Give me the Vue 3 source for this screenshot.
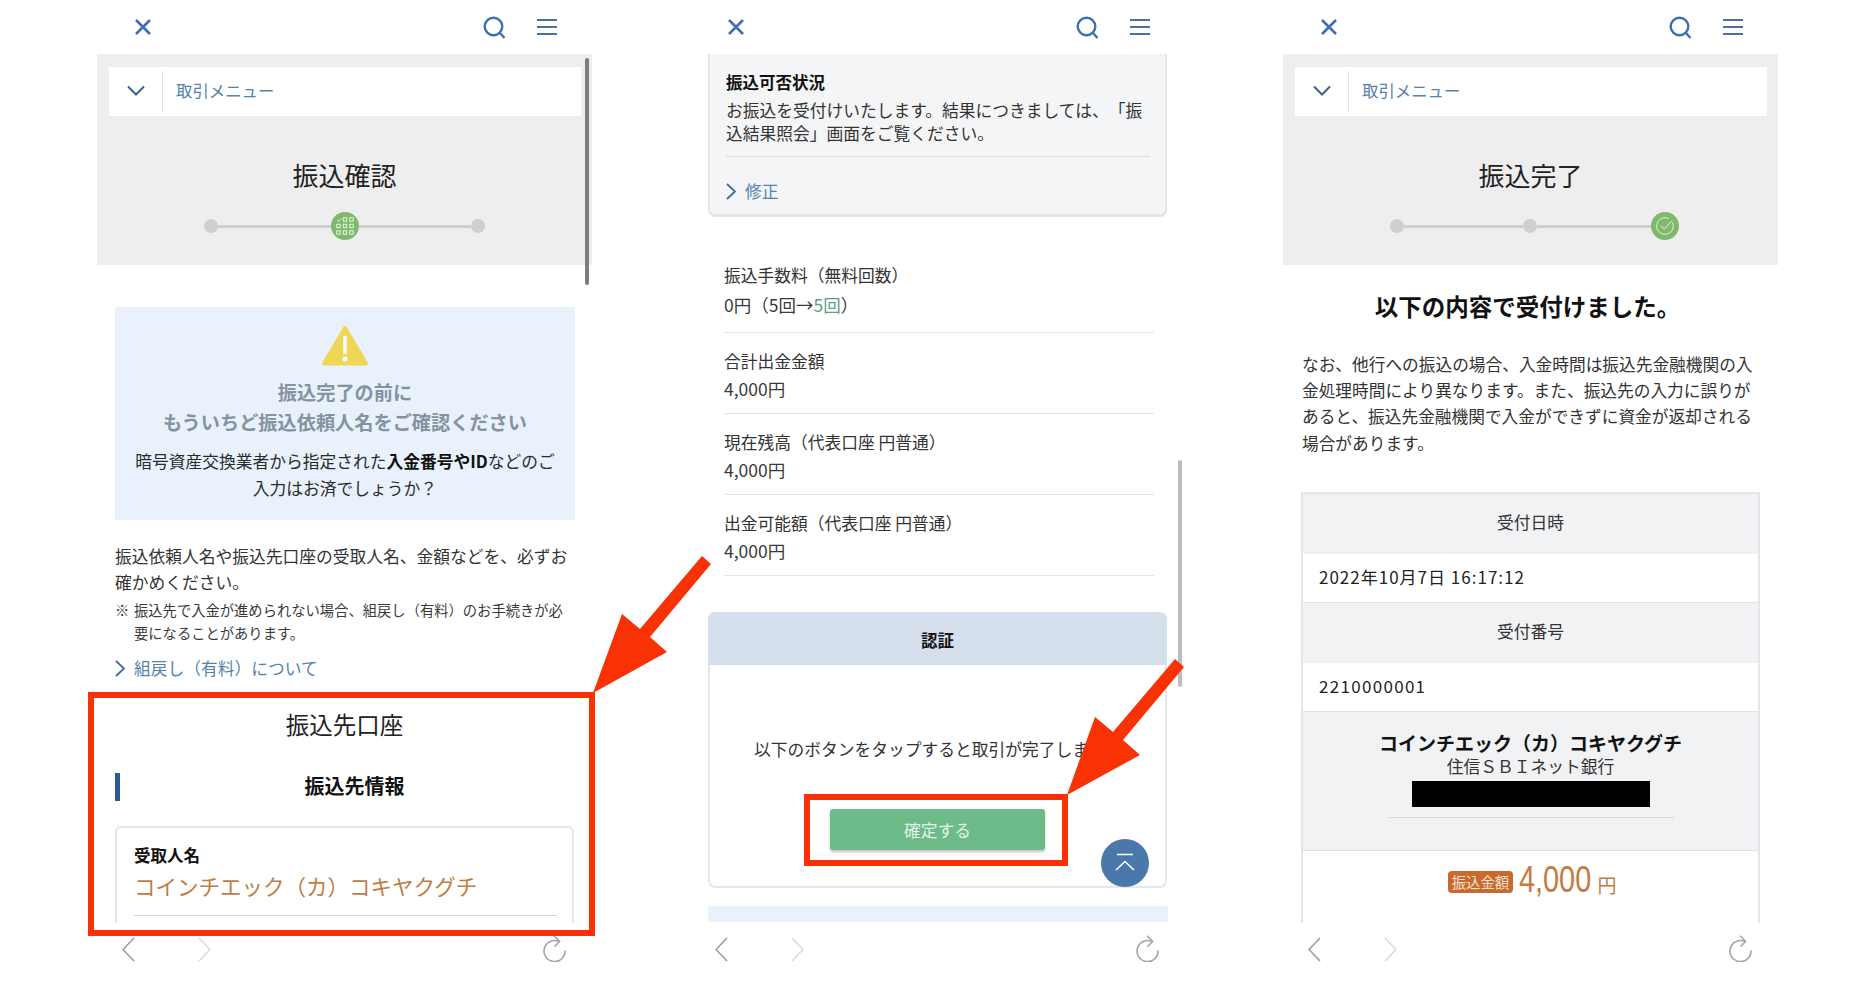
<script setup>
const phones = [1, 2, 3]
const heroes = {
  1: { title: '振込確認', steps: ['dot', 113, 'grid', 112, 'dot'] },
  3: { title: '振込完了', steps: ['dot', 119, 'dot', 114, 'check'] }
}
const rows = [
  { label: '合計出金金額', value: '4,000円' },
  { label: '現在残高（代表口座 円普通）', value: '4,000円' },
  { label: '出金可能額（代表口座 円普通）', value: '4,000円' }
]
const gridCells = [0, 1, 2, 3, 4, 5, 6, 7, 8]
</script>

<template>
  <div class="page">
    <section v-for="p in phones" :key="p" class="phone">
      <header class="topbar">
        <svg class="ic-close" width="16" height="16" viewBox="0 0 16 16"><path d="M1 1L15 15M15 1L1 15" /></svg>
        <span class="grow"></span>
        <svg class="ic-search" width="24" height="24" viewBox="0 0 24 24"><circle cx="10.5" cy="10.5" r="8.8" /><path d="M17 17L21.5 22" /></svg>
        <svg class="ic-menu" width="20" height="16" viewBox="0 0 20 16"><path d="M0 1H20M0 8H20M0 15H20" /></svg>
      </header>

      <main class="screen">
        <div v-if="p !== 2" class="hero">
          <div class="menubar">
            <span class="menu-toggle">
              <svg width="18" height="11" viewBox="0 0 18 11"><path d="M1 1.5L9 9.5L17 1.5" /></svg>
            </span>
            <span class="menu-label">取引メニュー</span>
          </div>
          <h1 class="hero-title">{{ heroes[p].title }}</h1>
          <div class="stepper">
            <template v-for="(s, i) in heroes[p].steps" :key="i">
              <span v-if="s === 'dot'" class="step-dot"></span>
              <span v-else-if="s === 'grid'" class="step-active">
                <svg width="18" height="18" viewBox="0 0 18 18">
                  <template v-for="c in gridCells" :key="c">
                    <path v-if="c === 0" d="M1 3L2.5 4.5L5 1.5" />
                    <rect v-else :x="(c % 3) * 6.5 + 0.8" :y="Math.floor(c / 3) * 6.5 + 0.8" width="3.4" height="3.4" />
                  </template>
                </svg>
              </span>
              <span v-else-if="s === 'check'" class="step-active">
                <svg width="20" height="20" viewBox="0 0 20 20">
                  <path d="M17.5 6.5A8.3 8.3 0 1 1 13.5 2.5" />
                  <path d="M5.5 9.5L9.5 13L17 4.5" />
                </svg>
              </span>
              <span v-else class="step-line" :style="{ width: s + 'px' }"></span>
            </template>
          </div>
        </div>

        <template v-if="p === 1">
          <div class="scrollbar sb-one"></div>
          <div class="notice">
            <svg class="warn" width="46" height="41" viewBox="0 0 46 41">
              <path class="warn-tri" d="M23 3L44 38.5H2Z" />
              <path class="warn-bar" d="M23 11V29" />
              <circle class="warn-dot" cx="23" cy="34" r="2.6" />
            </svg>
            <p class="notice-title">振込完了の前に<br />もういちど振込依頼人名をご確認ください</p>
            <p class="notice-body">暗号資産交換業者から指定された<b>入金番号やID</b>などのご<br />入力はお済でしょうか？</p>
          </div>
          <p class="para">振込依頼人名や振込先口座の受取人名、金額などを、必ずお確かめください。</p>
          <p class="note"><span class="note-mark">※</span><span>振込先で入金が進められない場合、組戻し（有料）のお手続きが必要になることがあります。</span></p>
          <a class="link link-one">
            <svg width="10" height="17" viewBox="0 0 10 17"><path d="M1 1L9 8.5L1 16" /></svg>
            組戻し（有料）について
          </a>
          <h2 class="account-title">振込先口座</h2>
          <div class="section-head"><span class="section-label">振込先情報</span></div>
          <div class="payee">
            <div class="payee-label">受取人名</div>
            <div class="payee-name">コインチエック（カ）コキヤクグチ</div>
            <div class="payee-line"></div>
          </div>
        </template>

        <template v-if="p === 2">
          <div class="scrollbar sb-two"></div>
          <div class="status">
            <div class="status-title">振込可否状況</div>
            <p class="status-body">お振込を受付けいたします。結果につきましては、「振込結果照会」画面をご覧ください。</p>
            <div class="status-line"></div>
            <a class="link link-two">
              <svg width="10" height="17" viewBox="0 0 10 17"><path d="M1 1L9 8.5L1 16" /></svg>
              修正
            </a>
          </div>
          <div class="row row-first">
            <div class="row-label">振込手数料（無料回数）</div>
            <div class="row-value">0円（5回→<span class="green">5回</span>）</div>
          </div>
          <div v-for="r in rows" :key="r.label" class="row">
            <div class="row-label">{{ r.label }}</div>
            <div class="row-value">{{ r.value }}</div>
          </div>
          <div class="auth">
            <div class="auth-head">認証</div>
            <div class="auth-body">
              <p class="auth-text">以下のボタンをタップすると取引が完了します。</p>
              <button class="confirm" type="button">確定する</button>
            </div>
          </div>
          <div class="next-block"></div>
          <div class="to-top">
            <svg width="22" height="22" viewBox="0 0 22 22"><path d="M3 2.5H19M2 18L11 9.5L20 18" /></svg>
          </div>
        </template>

        <template v-if="p === 3">
          <h2 class="done-title">以下の内容で受付けました。</h2>
          <p class="done-body">なお、他行への振込の場合、入金時間は振込先金融機関の入金処理時間により異なります。また、振込先の入力に誤りがあると、振込先金融機関で入金ができずに資金が返却される場合があります。</p>
          <div class="table">
            <div class="t-head">受付日時</div>
            <div class="t-val t-date">2022年10月7日 16:17:12</div>
            <div class="t-head">受付番号</div>
            <div class="t-val t-num">2210000001</div>
            <div class="t-bank">
              <div class="bank-name">コインチエック（カ）コキヤクグチ</div>
              <div class="bank-sub">住信ＳＢＩネット銀行</div>
              <div class="bank-mask"></div>
              <div class="bank-line"></div>
            </div>
            <div class="t-amount">
              <span class="badge">振込金額</span>
              <span class="amount">4,000</span>
              <span class="yen">円</span>
            </div>
          </div>
        </template>
      </main>

      <footer class="bottombar">
        <svg class="ic-back" width="13" height="25" viewBox="0 0 13 25"><path d="M12 1L1 12.5L12 24" /></svg>
        <svg class="ic-forward" width="13" height="25" viewBox="0 0 13 25"><path d="M1 1L12 12.5L1 24" /></svg>
        <span class="grow"></span>
        <svg class="ic-reload" width="25" height="27" viewBox="0 0 25 27"><path d="M17 6.6A10.5 10.5 0 1 0 23 15.5" /><path d="M12 0.8L17.6 6.5L12.5 11.5" /></svg>
      </footer>
    </section>

    <svg class="annotations" width="1875" height="984" viewBox="0 0 1875 984">
      <rect x="91" y="695" width="501" height="238" />
      <polygon points="702,556 711,564 650,637 667,652 593,693 622,614 640,629" />
      <rect x="807" y="797" width="258" height="66" />
      <polygon points="1175,659 1184,667 1123,740 1140,755 1067,795 1095,717 1113,732" />
    </svg>
  </div>
</template>

<style>
html, body { margin: 0; background: #fff; }
</style>

<style scoped>
.page {
  position: relative;
  display: flex;
  gap: 98px;
  box-sizing: border-box;
  width: 1875px;
  height: 984px;
  padding-left: 97px;
  overflow: hidden;
  background: #fff;
  color: #222;
  font-family: "Noto Sans CJK JP", "Liberation Sans", sans-serif;
  font-size: 16.75px;
  text-spacing-trim: space-all;
}
p, h1, h2 { margin: 0; font-weight: 400; }
.grow { flex: 1; }
svg { display: block; fill: none; }

.phone { display: flex; flex-direction: column; flex: none; width: 495px; height: 984px; }

.topbar { display: flex; align-items: center; flex: none; height: 54px; padding: 0 35.5px 0 38px; box-sizing: border-box; }
.ic-close { margin-top: -1px; }
.ic-close path { stroke: #3d6db5; stroke-width: 2.6; }
.ic-search { margin-right: 30px; margin-top: 2px; }
.ic-search circle, .ic-search path { stroke: #3f6fb3; stroke-width: 2.4; }
.ic-menu path { stroke: #4a719c; stroke-width: 2; }

.screen { position: relative; flex: none; height: 869px; overflow: hidden; }

.hero { box-sizing: border-box; height: 211px; padding-top: 13px; background: #eeeeee; }
.menubar { display: flex; align-items: center; height: 49px; margin: 0 11px 0 12px; background: #fff; }
.menu-toggle { display: flex; align-items: center; justify-content: center; box-sizing: border-box; width: 54px; height: 41px; padding-bottom: 3px; border-right: 1px solid #dfe3e6; }
.menu-toggle path { stroke: #3a6390; stroke-width: 2; }
.menu-label { margin-bottom: 3px; padding-left: 13px; font-size: 16.4px; color: #5583ad; }
.hero-title { height: 36px; margin-top: 41px; font-size: 26px; line-height: 36px; text-align: center; color: #222; }
.stepper { display: flex; align-items: center; height: 28px; margin-top: 19px; padding-left: 107px; }
.step-dot { flex: none; width: 14px; height: 14px; border-radius: 50%; background: #cfcfcf; }
.step-line { flex: none; height: 3px; background: #cfcfcf; }
.step-active { display: flex; flex: none; align-items: center; justify-content: center; width: 28px; height: 28px; border-radius: 50%; background: #7fba6c; }
.step-active rect, .step-active path { stroke: #e7f3e2; stroke-width: 1; }

.scrollbar { position: absolute; left: 488px; width: 4px; height: 227px; border-radius: 2px; }
.sb-one { top: 4px; background: #7d7d7d; }
.sb-two { top: 406px; background: #bdbdbd; }

.notice { box-sizing: border-box; height: 213px; margin: 42px 17px 0 18px; padding-top: 18px; background: #e9f2fc; text-align: center; }
.warn { margin: 0 auto; }
.warn-tri { fill: #eed656; stroke: #eed656; stroke-width: 4; stroke-linejoin: round; }
.warn-bar { stroke: #fff; stroke-width: 3.4; }
.warn-dot { fill: #fff; }
.notice-title { margin-top: 11px; font-size: 19.2px; font-weight: 700; line-height: 30px; color: #8593a1; }
.notice-body { margin-top: 11px; font-size: 16.75px; line-height: 27px; color: #2a2a2a; }
.notice-body b { color: #111; }

.para { margin: 23px 18px 0; font-size: 16.75px; line-height: 26px; color: #333; }
.note { display: flex; margin: 3px 18px 0; font-size: 14.3px; line-height: 23px; color: #3a3a3a; }
.note-mark { flex: none; width: 19px; }

.link { display: flex; align-items: center; color: #5583ad; line-height: 26px; }
.link svg { margin-right: 9px; }
.link path { stroke: #3f6c9f; stroke-width: 1.8; }
.link-one { margin: 11px 18px 0; }

.account-title { height: 34px; margin-top: 26px; font-size: 23.5px; line-height: 34px; text-align: center; color: #222; }
.section-head { box-sizing: border-box; height: 28px; margin: 32px 18px 0; padding-left: 5px; border-left: 5px solid #2d5b92; text-align: center; }
.section-label { display: block; padding-left: 10px; font-size: 20px; font-weight: 700; line-height: 26px; color: #111; }
.payee { box-sizing: border-box; height: 130px; margin: 25px 18px 0; padding: 15px 15px 0 17px; border: 2px solid #e4e6ea; border-radius: 6px; }
.payee-label { font-size: 16.5px; font-weight: 700; line-height: 24px; color: #111; }
.payee-name { margin-top: 4px; font-size: 21.5px; line-height: 30px; color: #c27c44; }
.payee-line { height: 1px; margin-top: 14px; background: #cfd2d6; }

.status { box-sizing: border-box; height: 163px; margin: 0 18px; padding: 16px 15px 0 16px; border: 2px solid #e3e5e8; border-top: 0; border-bottom-width: 3px; border-radius: 0 0 7px 7px; background: #f4f5f6; }
.status-title { font-size: 16.5px; font-weight: 700; line-height: 24px; color: #111; }
.status-body { margin-top: 5px; line-height: 23px; color: #333; }
.status-line { height: 1px; margin-top: 11px; background: #d9dbde; }
.link-two { margin-top: 21px; }

.row { box-sizing: border-box; height: 81px; margin: 0 31px 0 34px; padding-top: 16px; border-bottom: 1.5px solid #e3e4e6; }
.row-first { height: 70px; margin-top: 46px; padding-top: 0; }
.row-first .row-value { margin-top: 6px; }
.row-label { line-height: 24px; color: #333; }
.row-value { margin-top: 4px; font-size: 17.5px; line-height: 24px; color: #3a3a3a; }
.green { color: #5f9f80; }

.auth { box-sizing: border-box; height: 276px; margin: 36px 18px 0; overflow: hidden; border-radius: 7px; background: #fff; }
.auth-head { height: 53px; font-size: 16.5px; font-weight: 700; line-height: 56px; text-align: center; color: #111; background: #d6e0ed; }
.auth-body { box-sizing: border-box; height: 223px; padding-top: 71px; border: 2px solid #e3e7ee; border-top: 0; border-radius: 0 0 7px 7px; text-align: center; }
.auth-text { line-height: 26px; color: #333; }
.confirm { display: block; width: 215px; height: 41px; margin: 47px auto 0; padding: 0; border: 0; border-radius: 3px; background: #6dbb88; box-shadow: 0 2px 3px rgba(0, 0, 0, .25); font: inherit; color: #e4f3e9; }
.next-block { height: 16px; margin: 18px 17px 0 18px; background: #e9f2fc; }
.to-top { position: absolute; left: 411px; top: 785px; display: flex; align-items: center; justify-content: center; width: 48px; height: 48px; border-radius: 50%; background: #4a78ab; }
.to-top path { stroke: #fff; stroke-width: 1.6; }

.done-title { height: 34px; margin-top: 24px; padding-right: 6px; font-size: 23.5px; font-weight: 700; line-height: 34px; text-align: center; color: #111; }
.done-body { margin: 28px 18px 0 19px; font-size: 16.7px; line-height: 26.2px; color: #333; }
.table { box-sizing: border-box; margin: 36px 18px 0; border: 2px solid #e4e6e9; border-bottom: 0; }
.t-head { height: 60px; line-height: 57px; text-align: center; color: #333; background: #f0f2f4; }
.t-val { box-sizing: border-box; height: 49px; padding-left: 16px; border-bottom: 1px solid #e0e2e5; font-size: 17px; line-height: 46px; color: #222; }
.t-date { letter-spacing: 1px; }
.t-num { letter-spacing: 1.3px; }
.t-bank { box-sizing: border-box; height: 139px; padding-top: 18px; border-bottom: 1px solid #dfe1e4; text-align: center; background: #f0f2f4; }
.bank-name { font-size: 19px; font-weight: 700; line-height: 26px; color: #111; }
.bank-sub { margin-top: -2px; line-height: 24px; color: #333; }
.bank-mask { width: 238px; height: 26px; margin: 3px auto 0; background: #000; }
.bank-line { width: 286px; height: 1px; margin: 10px auto 0; background: #d5d7da; }
.t-amount { display: flex; align-items: flex-end; justify-content: center; height: 80px; padding-left: 3.5px; }
.badge { display: block; width: 65px; height: 22px; margin-bottom: 38px; border-radius: 4px; background: #c8692d; color: #f7e0cf; font-size: 14.4px; line-height: 22px; text-align: center; }
.amount { display: block; width: 72px; margin: 0 6.5px 31px 6px; color: #c57a44; font-family: "Liberation Sans", sans-serif; font-size: 37px; line-height: 40px; transform: scaleX(.78); transform-origin: left center; }
.yen { display: block; margin-bottom: 34px; color: #c57a44; font-size: 19px; line-height: 24px; }

.bottombar { display: flex; align-items: flex-start; flex: 1; box-sizing: border-box; padding: 14px 25px 0 25px; }
.ic-back path { stroke: #9b9b9b; stroke-width: 1.6; }
.ic-forward { margin-left: 63px; }
.ic-forward path { stroke: #dadada; stroke-width: 1.6; }
.ic-reload { margin-top: -2px; }
.ic-reload path { stroke: #a5a5a5; stroke-width: 1.6; }

.annotations { position: absolute; left: 0; top: 0; pointer-events: none; }
.annotations rect { fill: none; stroke: #f93206; stroke-width: 6; }
.annotations polygon { fill: #f93206; }
</style>
